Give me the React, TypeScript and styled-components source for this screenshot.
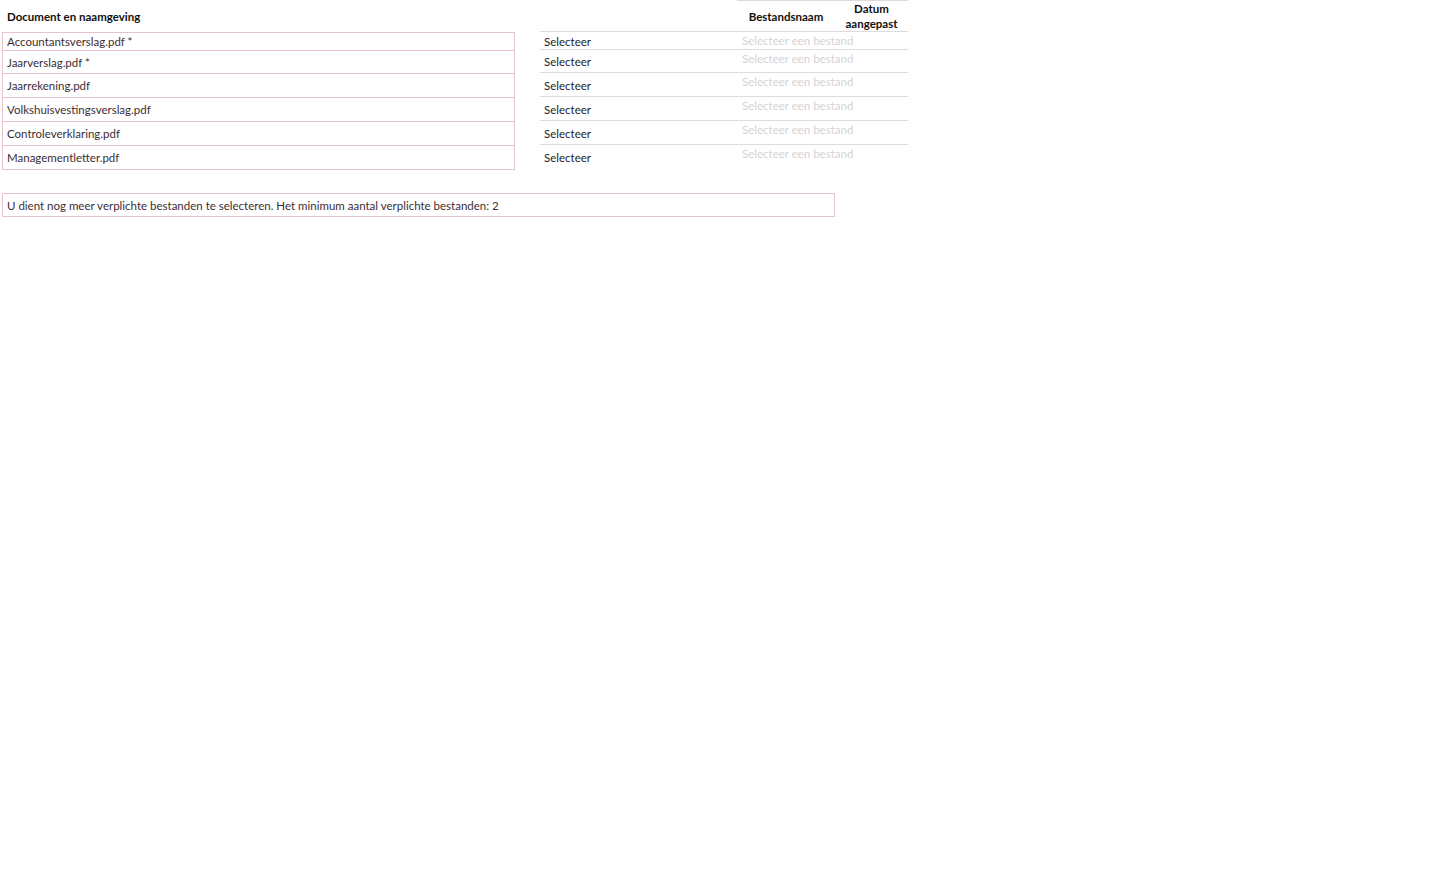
import styled, { createGlobalStyle } from "styled-components";

const GlobalStyle = createGlobalStyle`
  html, body {
    margin: 0;
    padding: 0;
    background: #fff;
  }
  body {
    font-family: Lato, "Open Sans", Arial, sans-serif;
    font-size: 11.5px;
    color: #222;
  }
`;

const pink = "#e7c3cd";
const grey = "#dcdcdc";

const Page = styled.div`
  padding-left: 2px;
`;

const Top = styled.div`
  display: flex;
  align-items: flex-start;
`;

const LeftBlock = styled.div`
  width: 513px;
`;

const LeftHeader = styled.div`
  height: 32px;
  display: flex;
  align-items: center;
  padding-left: 5px;
  font-weight: 700;
  color: #111;
`;

const LeftBody = styled.div`
  border: 1px solid ${pink};
`;

const DocRow = styled.div<{ $h: number }>`
  box-sizing: border-box;
  height: ${(p) => p.$h}px;
  display: flex;
  align-items: center;
  padding-left: 4px;
  color: #3d2e33;
  border-bottom: 1px solid ${pink};
  &:last-child {
    border-bottom: none;
  }
`;

const RightBlock = styled.div`
  margin-left: 25px;
  width: 368px;
`;

const Grid = styled.div`
  display: grid;
  grid-template-columns: 197px 98px 73px;
`;

const HeadRow = styled(Grid)`
  height: 32px;
  box-sizing: border-box;
  border-bottom: 1px solid ${grey};
`;

const HeadCell = styled.div<{ $top?: boolean }>`
  display: flex;
  align-items: center;
  justify-content: center;
  text-align: center;
  font-weight: 700;
  color: #111;
  line-height: 15px;
  border-top: ${(p) => (p.$top ? `1px solid ${grey}` : "1px solid transparent")};
`;

const FileRow = styled(Grid)<{ $h: number }>`
  box-sizing: border-box;
  height: ${(p) => p.$h}px;
  border-bottom: 1px solid ${grey};
  &:last-child {
    border-bottom: none;
  }
`;

const SelectCell = styled.div`
  display: flex;
  align-items: center;
  padding: 1px 0 0 4px;
  color: #1e1e1e;
`;

const Placeholder = styled.div`
  padding: 2px 0 0 5px;
  line-height: 14px;
  white-space: nowrap;
  color: #d4d4d4;
`;

const Message = styled.div`
  margin-top: 23px;
  width: 833px;
  height: 24px;
  box-sizing: border-box;
  border: 1px solid ${pink};
  display: flex;
  align-items: center;
  padding-left: 4px;
  color: #3d2e33;
`;

const docs = [
  "Accountantsverslag.pdf *",
  "Jaarverslag.pdf *",
  "Jaarrekening.pdf",
  "Volkshuisvestingsverslag.pdf",
  "Controleverklaring.pdf",
  "Managementletter.pdf",
];

const leftHeights = [18, 23, 24, 24, 24, 23];
const rightHeights = [18, 23, 24, 24, 24, 24];

export default function App() {
  return (
    <Page>
      <GlobalStyle />
      <Top>
        <LeftBlock>
          <LeftHeader>Document en naamgeving</LeftHeader>
          <LeftBody>
            {docs.map((d, i) => (
              <DocRow key={d} $h={leftHeights[i]}>
                {d}
              </DocRow>
            ))}
          </LeftBody>
        </LeftBlock>
        <RightBlock>
          <HeadRow>
            <HeadCell />
            <HeadCell $top>Bestandsnaam</HeadCell>
            <HeadCell $top>
              Datum
              <br />
              aangepast
            </HeadCell>
          </HeadRow>
          {docs.map((d, i) => (
            <FileRow key={d} $h={rightHeights[i]}>
              <SelectCell>Selecteer</SelectCell>
              <Placeholder>Selecteer een bestand</Placeholder>
              <div />
            </FileRow>
          ))}
        </RightBlock>
      </Top>
      <Message>
        U dient nog meer verplichte bestanden te selecteren. Het minimum aantal
        verplichte bestanden: 2
      </Message>
    </Page>
  );
}
